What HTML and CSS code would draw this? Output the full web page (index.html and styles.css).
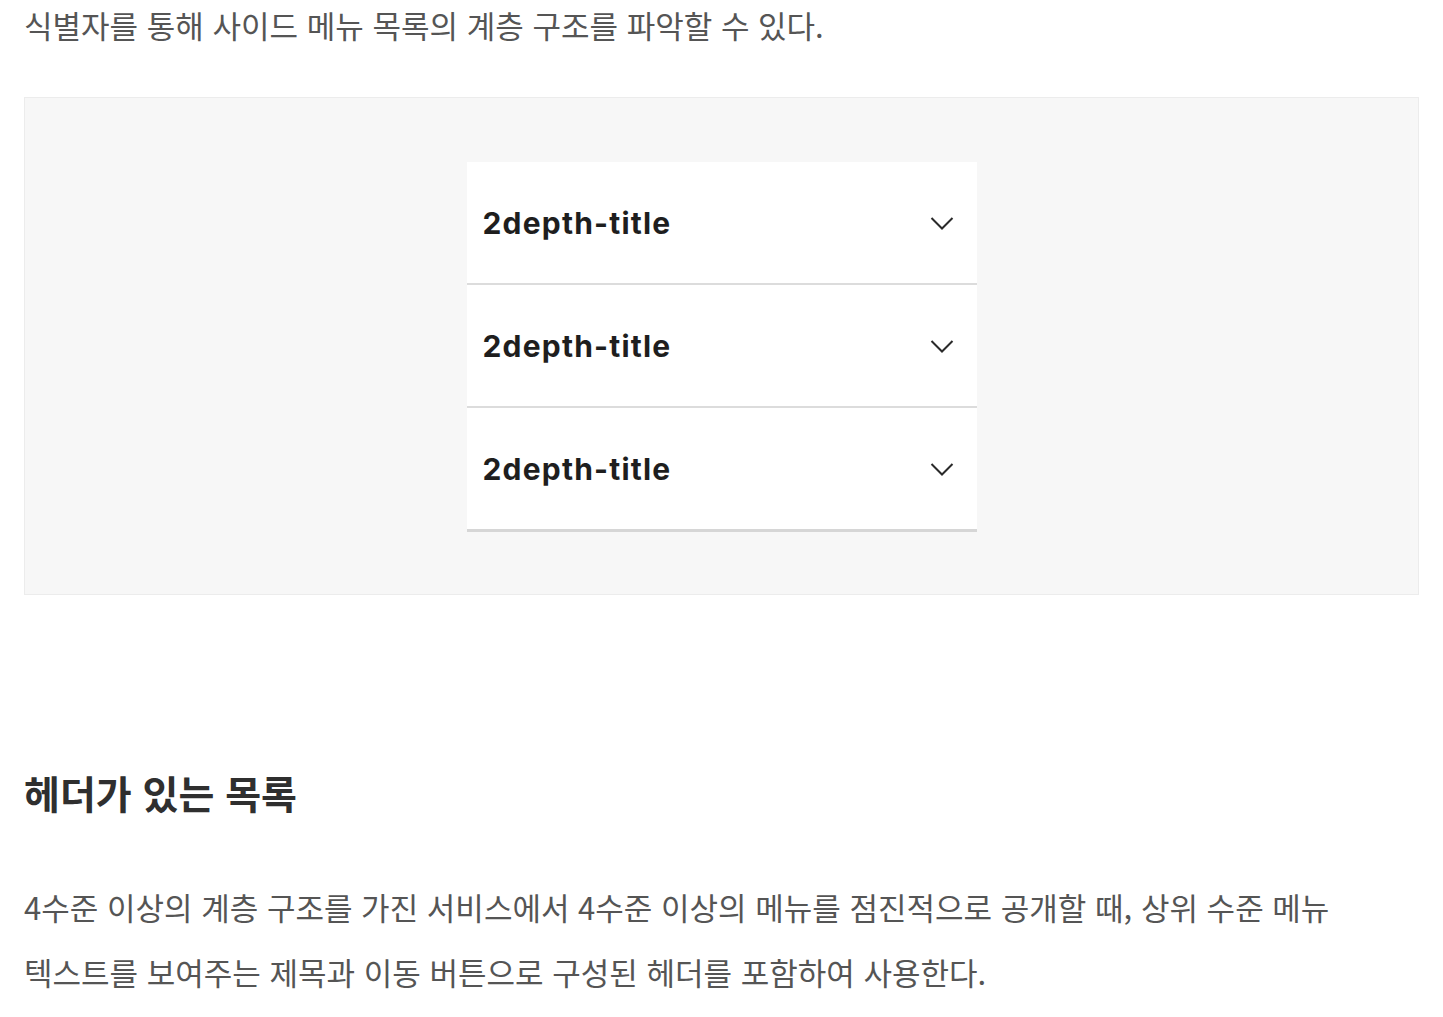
FILE: index.html
```html
<!DOCTYPE html>
<html lang="ko">
<head>
<meta charset="utf-8">
<title>사이드 메뉴</title>
<link rel="stylesheet" href="styles.css">
</head>
<body>
<main class="doc">
  <p class="desc desc-top">식별자를 통해 사이드 메뉴 목록의 계층 구조를 파악할 수 있다.</p>
  <div class="demo">
    <ul class="menu">
      <li class="menu-item">
        <span class="menu-title">2depth-title</span>
        <svg class="chev" width="24" height="24" viewBox="0 0 24 24" aria-hidden="true"><path d="M1.5 7 L12 17.5 L22.5 7" fill="none" stroke="#2a2a2a" stroke-width="2"/></svg>
      </li>
      <li class="menu-item">
        <span class="menu-title">2depth-title</span>
        <svg class="chev" width="24" height="24" viewBox="0 0 24 24" aria-hidden="true"><path d="M1.5 7 L12 17.5 L22.5 7" fill="none" stroke="#2a2a2a" stroke-width="2"/></svg>
      </li>
      <li class="menu-item">
        <span class="menu-title">2depth-title</span>
        <svg class="chev" width="24" height="24" viewBox="0 0 24 24" aria-hidden="true"><path d="M1.5 7 L12 17.5 L22.5 7" fill="none" stroke="#2a2a2a" stroke-width="2"/></svg>
      </li>
    </ul>
  </div>
  <h2 class="heading">헤더가 있는 목록</h2>
  <p class="desc desc-body">4수준 이상의 계층 구조를 가진 서비스에서 4수준 이상의 메뉴를 점진적으로 공개할 때, 상위 수준 메뉴 텍스트를 보여주는 제목과 이동 버튼으로 구성된 헤더를 포함하여 사용한다.</p>
</main>
</body>
</html>
```

FILE: styles.css
```css
html, body {
  margin: 0;
  padding: 0;
  background: #ffffff;
}
.doc {
  padding: 0 24px;
  font-family: "Noto Sans CJK KR", "Noto Sans", sans-serif;
}
.desc {
  margin: 0;
  font-size: 31px;
  line-height: 65px;
  color: #555555;
  letter-spacing: 0;
  word-break: keep-all;
}
.desc-top {
  margin-top: -8px;
}
.demo {
  margin-top: 40px;
  height: 498px;
  border: 1px solid #ececec;
  background: #f7f7f7;
  display: flex;
  justify-content: center;
  align-items: flex-start;
  padding-top: 64px;
  box-sizing: border-box;
}
.menu {
  list-style: none;
  margin: 0;
  padding: 0;
  width: 510px;
  background: #ffffff;
}
.menu-item {
  height: 121px;
  display: flex;
  align-items: center;
  justify-content: space-between;
  padding: 0 16px;
  border-bottom: 2px solid #dcdcdc;
}
.menu-item:last-child {
  border-bottom: 3px solid #d6d6d6;
}
.menu-title {
  font-family: Inter, "Noto Sans", sans-serif;
  font-weight: 700;
  font-size: 30px;
  color: #1e1e1e;
  letter-spacing: 1.2px;
}
.chev {
  display: block;
  margin-right: 7px;
}
.heading {
  margin: 169px 0 0;
  font-size: 39px;
  line-height: 56px;
  font-weight: 700;
  color: #2f2f2f;
  letter-spacing: 0;
}
.desc-body {
  margin-top: 54px;
}
```
